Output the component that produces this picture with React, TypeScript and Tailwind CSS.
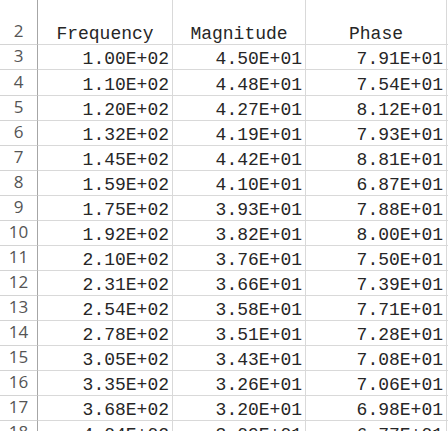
import React from "react";

const rows: [number, string, string, string][] = [
  [3, "1.00E+02", "4.50E+01", "7.91E+01"],
  [4, "1.10E+02", "4.48E+01", "7.54E+01"],
  [5, "1.20E+02", "4.27E+01", "8.12E+01"],
  [6, "1.32E+02", "4.19E+01", "7.93E+01"],
  [7, "1.45E+02", "4.42E+01", "8.81E+01"],
  [8, "1.59E+02", "4.10E+01", "6.87E+01"],
  [9, "1.75E+02", "3.93E+01", "7.88E+01"],
  [10, "1.92E+02", "3.82E+01", "8.00E+01"],
  [11, "2.10E+02", "3.76E+01", "7.50E+01"],
  [12, "2.31E+02", "3.66E+01", "7.39E+01"],
  [13, "2.54E+02", "3.58E+01", "7.71E+01"],
  [14, "2.78E+02", "3.51E+01", "7.28E+01"],
  [15, "3.05E+02", "3.43E+01", "7.08E+01"],
  [16, "3.35E+02", "3.26E+01", "7.06E+01"],
  [17, "3.68E+02", "3.20E+01", "6.98E+01"],
  [18, "4.04E+02", "3.09E+01", "6.77E+01"],
];

const numCell =
  "w-[38px] shrink-0 border-r border-r-[#a6a6a6] border-b border-b-[#d4d4d4] flex items-end justify-center pb-[2px] text-[17px] leading-[22px] text-[#555] font-['Open_Sans','Noto_Sans',sans-serif]";
const dataCell =
  "shrink-0 border-r border-b border-[#d9d9d9] flex items-end justify-end pr-[3px] text-[18px] leading-[20px] text-[#262626] font-['Liberation_Mono','Courier_New',monospace]";
const headCell =
  "shrink-0 border-r border-b border-[#d9d9d9] flex items-end justify-center text-[18px] leading-[20px] text-[#262626] font-['Liberation_Mono','Courier_New',monospace]";

function Row({ n, a, b, c, h }: { n: number; a: string; b: string; c: string; h: string }) {
  return (
    <div className={`flex ${h} shrink-0`}>
      <div className={numCell}>{n}</div>
      <div className={`w-[135px] ${dataCell}`}>{a}</div>
      <div className={`w-[133px] ${dataCell}`}>{b}</div>
      <div className={`w-[141px] ${dataCell}`}>{c}</div>
      <div className="flex-1 border-b border-[#d9d9d9]" />
    </div>
  );
}

export default function App() {
  return (
    <div className="w-[448px] h-[431px] overflow-hidden bg-white flex flex-col">
      <div className="flex h-[45px] shrink-0">
        <div className={numCell}>2</div>
        <div className={`w-[135px] ${headCell}`}>Frequency</div>
        <div className={`w-[133px] ${headCell}`}>Magnitude</div>
        <div className={`w-[141px] ${headCell}`}>Phase</div>
        <div className="flex-1 border-b border-[#d9d9d9]" />
      </div>
      {rows.map(([n, a, b, c]) => (
        <Row key={n} n={n} a={a} b={b} c={c} h={n === 4 ? "h-[26px]" : "h-[25px]"} />
      ))}
    </div>
  );
}
